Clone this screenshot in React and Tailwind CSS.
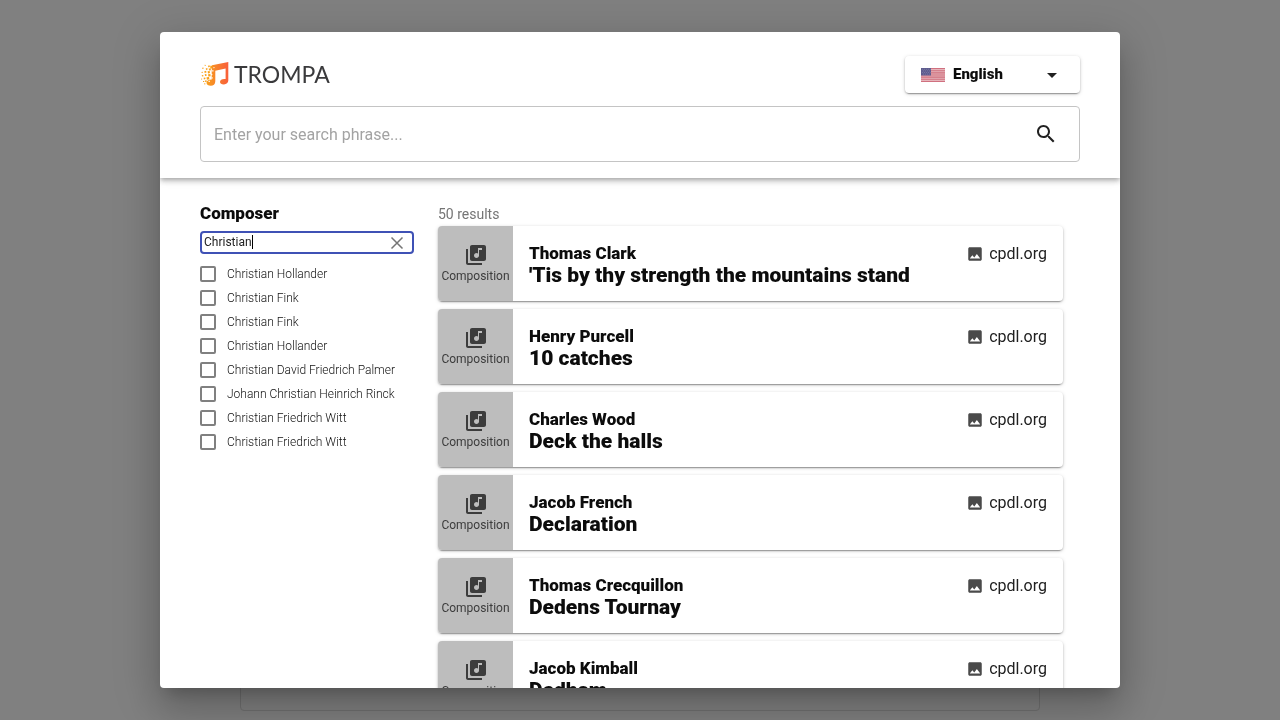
import React, { useState } from "react";

const composers = [
  "Christian Hollander",
  "Christian Fink",
  "Christian Fink",
  "Christian Hollander",
  "Christian David Friedrich Palmer",
  "Johann Christian Heinrich Rinck",
  "Christian Friedrich Witt",
  "Christian Friedrich Witt",
];

const results = [
  { composer: "Thomas Clark", title: "'Tis by thy strength the mountains stand" },
  { composer: "Henry Purcell", title: "10 catches" },
  { composer: "Charles Wood", title: "Deck the halls" },
  { composer: "Jacob French", title: "Declaration" },
  { composer: "Thomas Crecquillon", title: "Dedens Tournay" },
  { composer: "Jacob Kimball", title: "Dedham" },
];

function Logo() {
  return (
    <a href="#home" aria-label="Trompa home" className="flex items-center gap-1 pb-[2px] text-[#3a3a3c]">
      <svg viewBox="0 0 30 26" className="h-[26px] w-[30px]" aria-hidden="true">
        <defs>
          <linearGradient id="note" gradientUnits="userSpaceOnUse" x1="6" y1="0" x2="28" y2="0">
            <stop offset="0" stopColor="#f9a11b" />
            <stop offset="0.5" stopColor="#f7802c" />
            <stop offset="1" stopColor="#f9603a" />
          </linearGradient>
        </defs>
        <path
          fill="url(#note)"
          d="M12 4.200 28.300 1V19.500c0 2.300-1.900 3.800-4.300 3.900-2.300.1-4-.9-4-2.500 0-2.100 2.400-3.400 5.600-2.900V7.600L15.300 9.700v10.500c0 2.900-2 4.600-4.500 4.600s-4.300-1.200-4.300-3c0-1.900 1.900-3.300 5.200-3.300V12z"
        />
        <g fill="#f9a11b">
          <path d="m4.700 3.700 1.100.2-.2 1-1.100-.3zM8 4.800l1.500-.5.4 1.600-1.600.4zM2.200 6.800l1.200-.2.200 1.100-1.200.2zM10.300 4.800h2V7.500h-2zM5.700 7.400l1.600-.4.300 1.600-1.500.3zM8.700 7.600l1.900-.4.400 2-1.900.4zM1.500 11l1.200-.2.200 1-1.200.2zM4.300 10.200l1.800-.4.400 1.800-1.800.4zM7.600 10.300l2-.4.400 2.200-2 .4zM1.700 14.300l1.500-.3.300 1.300-1.500.3zM4.700 13.300l1.600-.3.400 1.700-1.600.3zM8 13.300l2.300-.3.400 2.300-2.300.3zM1 17.700l1.100-.1v1H1zM3.600 16.800l1.600-.3.300 1.600-1.600.3zM6.500 16.300l2.500-.3.400 2.300-2.500.4zM3 20l1.200-.1.100 1.200H3zM5 19.400l1.500-.2.200 1.800-1.500.1zM4.300 22.200l1.200.3-.3 1-1.100-.3z" />
        </g>
        <g fill="#fff">
          <path d="m12 9.500 1.200-.5.500 1.300-1.200.5zM11.200 12.700l1.300.4-.4 1.200-1.200-.3zM8.300 20.200l1.200-.6.600 1-1.100.7zM11.500 16.500l1.200-.2.100 1.200-1.100.1zM13.300 6.200l1-.3.300 1.100-1 .3z" />
        </g>
      </svg>
      <span className="font-['Lato',sans-serif] text-[23px] leading-7">TROMPA</span>
    </a>
  );
}

function Flag() {
  return (
    <svg viewBox="0 0 24 14" className="h-[14px] w-6 shrink-0" aria-hidden="true">
      <rect width="24" height="14" fill="#e6b5bb" />
      <path
        stroke="#d0707f"
        strokeWidth="1.08"
        d="M0 .54h24M0 2.700h24M0 4.850h24M0 7h24M0 9.150h24M0 11.300h24M0 13.460h24"
      />
      <rect width="10" height="7.500" fill="#5e5c8e" />
      <path
        stroke="#a4a3c2"
        strokeWidth="0.6"
        strokeDasharray="0.6 1.400"
        d="M1 1.300h8.500M2 2.900h7.500M1 4.500h8.500M2 6.100h7.500"
      />
    </svg>
  );
}

function Header() {
  const [phrase, setPhrase] = useState("");
  return (
    <header className="z-10 shrink-0 px-10 pt-6 pb-4 shadow-[0_2px_4px_-1px_rgba(0,0,0,0.2),0_4px_5px_rgba(0,0,0,0.14),0_1px_10px_rgba(0,0,0,0.12)]">
      <div className="mb-[13px] flex items-center justify-between">
        <Logo />
        <button
          type="button"
          aria-haspopup="listbox"
          className="flex h-[37px] w-[175px] items-center gap-2 rounded px-4 text-[15px] font-black text-[#0c0c0c] shadow-[0_3px_1px_-2px_rgba(0,0,0,0.2),0_1px_2px_rgba(0,0,0,0.24),0_1px_4px_rgba(0,0,0,0.14)]"
        >
          <Flag />
          <span className="grow text-left">English</span>
          <svg viewBox="0 0 24 24" className="size-6" fill="#212121" aria-hidden="true">
            <path d="m7 10 5 5 5-5z" />
          </svg>
        </button>
      </div>
      <form
        role="search"
        onSubmit={(e) => e.preventDefault()}
        className="flex h-14 items-center rounded border border-[#c4c4c4] pr-[21px] pl-[13px]"
      >
        <input
          type="search"
          aria-label="Search phrase"
          placeholder="Enter your search phrase..."
          value={phrase}
          onChange={(e) => setPhrase(e.target.value)}
          className="min-w-0 grow pt-[2px] text-base outline-none placeholder:text-[#a3a3a3]"
        />
        <button type="submit" aria-label="Search" className="flex size-6 items-center justify-center">
          <svg viewBox="0 0 24 24" className="size-6" fill="#212121" aria-hidden="true">
            <path d="M15.500 14h-.79l-.28-.27C15.410 12.590 16 11.110 16 9.500 16 5.910 13.090 3 9.500 3S3 5.910 3 9.500 5.910 16 9.500 16c1.610 0 3.090-.59 4.230-1.570l.27.28v.79l5 4.990L20.490 19l-4.990-5zm-6 0C7.010 14 5 11.990 5 9.500S7.010 5 9.500 5 14 7.010 14 9.500 11.990 14 9.500 14z" />
          </svg>
        </button>
      </form>
    </header>
  );
}

function ComposerFilter() {
  const [query, setQuery] = useState("Christian");
  return (
    <aside className="w-[214px] shrink-0">
      <h2 className="text-[17px] leading-[22px] font-black text-[#0c0c0c]">
        <label htmlFor="composer-filter">Composer</label>
      </h2>
      <div className="mt-[7px] flex h-[23px] items-center rounded border-2 border-[#3f51b5] pr-[7px] pl-[2px]">
        <div className="flex min-w-0 grow items-center pb-[2px]">
          <input
            id="composer-filter"
            type="text"
            autoFocus
            value={query}
            onChange={(e) => setQuery(e.target.value)}
            className="peer field-sizing-content max-w-full min-w-0 text-xs text-[#212121] caret-transparent outline-none"
          />
          <span className="hidden h-[14px] w-px shrink-0 bg-black peer-focus:block" aria-hidden="true" />
        </div>
        <button type="button" aria-label="Clear" onClick={() => setQuery("")} className="shrink-0">
          <svg viewBox="0 0 16 16" className="size-4" stroke="#757575" strokeWidth="1.500" aria-hidden="true">
            <path d="m2.500 2.500 11 11M13.500 2.500l-11 11" />
          </svg>
        </button>
      </div>
      <ul className="mt-2">
        {composers.map((name, i) => (
          <li key={i}>
            <label className="flex h-6 items-center gap-[11px] text-xs font-light text-[#101010]">
              <input
                type="checkbox"
                className="size-4 shrink-0 appearance-none rounded-[2px] border-2 border-[#808080] checked:bg-[#3f51b5]"
              />
              {name}
            </label>
          </li>
        ))}
      </ul>
    </aside>
  );
}

function ResultCard({ composer, title }) {
  return (
    <li className="flex h-[75px] shrink-0 overflow-hidden rounded bg-white shadow-[0_3px_1px_-2px_rgba(0,0,0,0.2),0_1px_2px_rgba(0,0,0,0.24),0_1px_4px_rgba(0,0,0,0.14)]">
      <div className="flex w-[75px] shrink-0 flex-col items-center bg-[#bdbdbd] pt-[17px] text-xs text-[#3c3c3c]">
        <svg viewBox="0 0 24 24" className="size-6" fill="#3c3c3c" aria-hidden="true">
          <path d="M20 2H8c-1.100 0-2 .9-2 2v12c0 1.100.9 2 2 2h12c1.100 0 2-.9 2-2V4c0-1.100-.9-2-2-2zm-2 5h-3v5.500c0 1.380-1.120 2.500-2.500 2.500S10 13.880 10 12.500s1.120-2.500 2.500-2.500c.57 0 1.080.19 1.500.51V5h4v2zM4 6H2v14c0 1.100.9 2 2 2h14v-2H4V6z" />
        </svg>
        <span className="leading-[18px]">Composition</span>
      </div>
      <div className="min-w-0 grow pt-4 pl-4 text-[#0c0c0c]">
        <p className="text-[17px] leading-[22px] font-black">{composer}</p>
        <h3 className="text-[21px] leading-[22px] font-black">{title}</h3>
      </div>
      <a href="#cpdl" className="mt-4 mr-4 flex h-6 shrink-0 items-center gap-[5px] text-base text-[#212121]">
        <svg viewBox="0 0 24 24" className="size-[18px]" fill="#4a4a4a" aria-hidden="true">
          <path d="M21 19V5c0-1.100-.9-2-2-2H5c-1.100 0-2 .9-2 2v14c0 1.100.9 2 2 2h14c1.100 0 2-.9 2-2zM8.500 13.500l2.500 3.010L14.500 12l4.500 6H5l3.500-4.500z" />
        </svg>
        cpdl.org
      </a>
    </li>
  );
}

export default function App() {
  return (
    <div className="h-screen overflow-hidden bg-[#808080] px-8 pt-12 pb-[9px] font-['Roboto',sans-serif]">
      <main className="mx-auto h-full max-w-[800px] rounded border border-[#707070]" />
      <div className="fixed inset-0 z-20 flex justify-center p-8">
        <div
          role="dialog"
          aria-modal="true"
          aria-label="Search compositions"
          className="flex w-full max-w-[960px] flex-col overflow-hidden rounded bg-white shadow-[0_11px_15px_-7px_rgba(0,0,0,0.2),0_24px_38px_3px_rgba(0,0,0,0.14),0_9px_46px_8px_rgba(0,0,0,0.12)]"
        >
          <Header />
          <div className="flex min-h-0 grow gap-5 pr-[53px] pl-10">
            <div className="pt-6">
              <ComposerFilter />
            </div>
            <section className="min-w-0 grow overflow-hidden px-1 pt-6">
              <p className="h-6 text-sm leading-6 text-[#757575]">50 results</p>
              <ul className="flex flex-col gap-2">
                {results.map((r) => (
                  <ResultCard key={r.title} {...r} />
                ))}
              </ul>
            </section>
          </div>
        </div>
      </div>
    </div>
  );
}
